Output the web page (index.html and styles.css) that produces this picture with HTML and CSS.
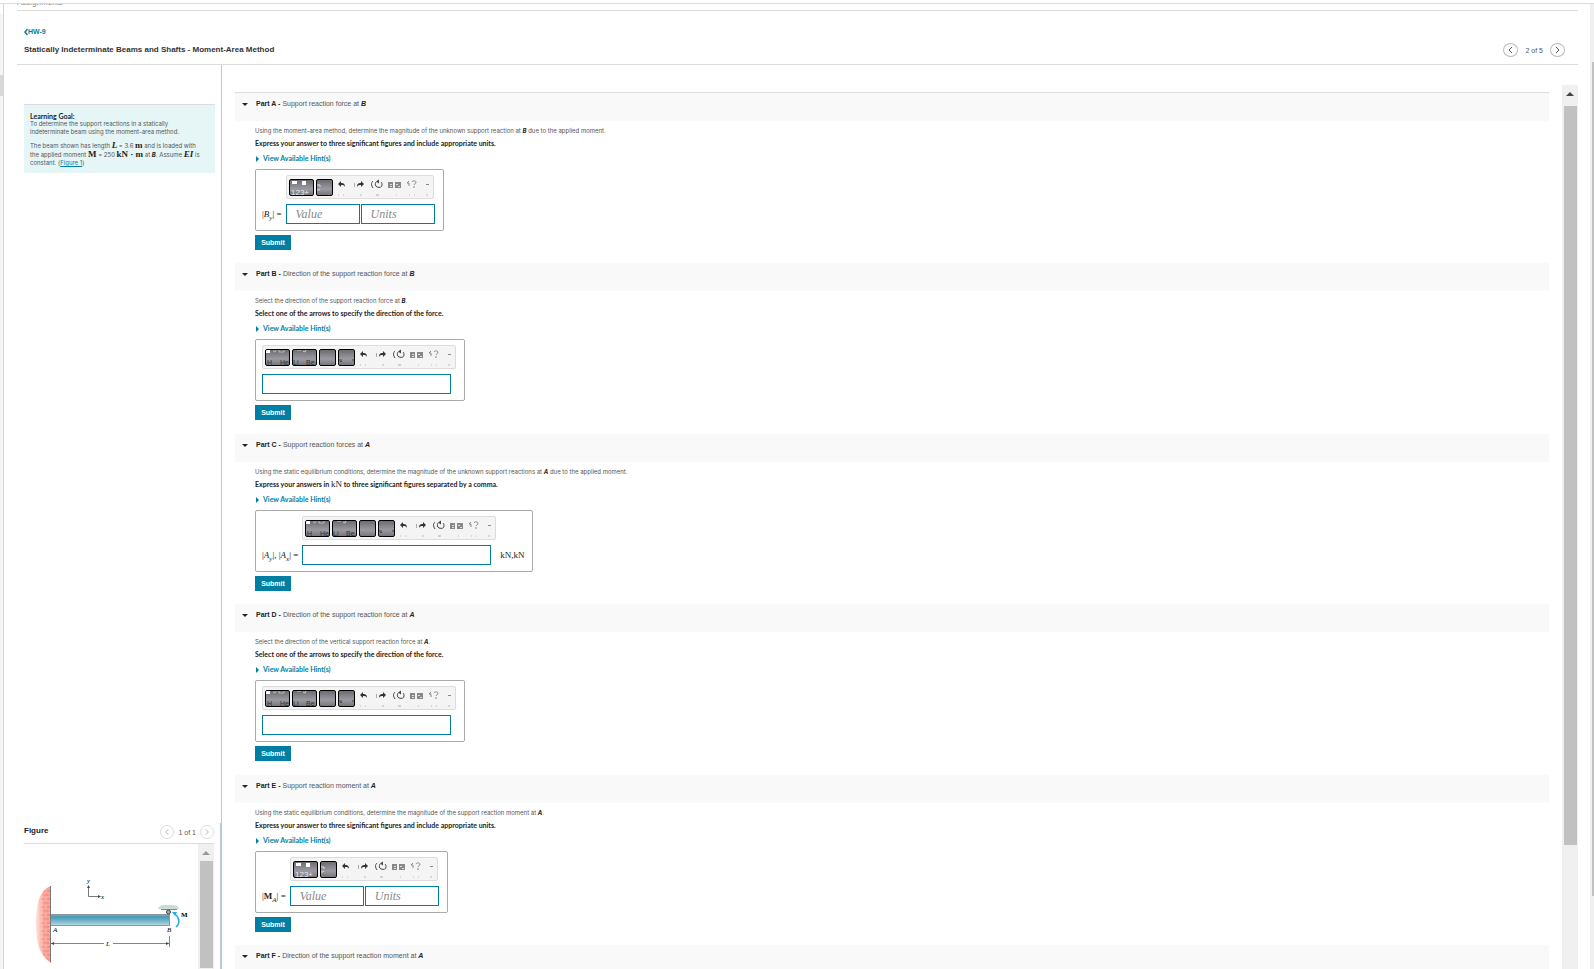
FILE: index.html
```html
<!DOCTYPE html>
<html lang="en">
    <head>
        <meta charset="UTF-8" />
        <meta name="viewport" content="width=device-width, initial-scale=1.0" />
        <title>Statically Indeterminate Beams and Shafts - Moment-Area Method</title>
        <link rel="stylesheet" href="styles.css">
    </head>
    <body>
        <!-- Shared icons -->
        <svg class="sprite" aria-hidden="true">
            <symbol id="undo" viewBox="0 0 16 22">
                <path d="M5 8l3-3v2c3 0 4 1 4 4-1-2-2-2-4-2v2z" fill="#333" />
                <path d="M5 19h1M10 19h1" stroke="#bbb" />
            </symbol>
            <symbol id="redo" viewBox="0 0 16 22">
                <path d="M13 8l-3-3v2c-3 0-4 1-4 4 1-2 2-2 4-2v2z" fill="#333" />
                <path d="M3.500 7v4" stroke="#aaa" />
                <path d="M9 19h2" stroke="#bbb" />
            </symbol>
            <symbol id="reset" viewBox="0 0 16 22">
                <path d="M4 5c-2 2-2 4 0 7M8 11c3 1 5 0 5-2 0-1 0-2-1-3M7 6c-1 2-1 4 1 5" fill="none" stroke="#444" />
                <path d="M7 5.500l3-2v4z" fill="#444" />
                <path d="M7 19h3" stroke="#aaa" />
            </symbol>
            <symbol id="keyboard" viewBox="0 0 16 22">
                <path d="M1 6h5v6H1zM8 6h6v6H8z" fill="#888" />
                <path d="M3 8.500h2M3 10.500h2M9 8.500h2M11 10.500h2" stroke="#ddd" />
                <path d="M9 19h1" stroke="#bbb" />
            </symbol>
            <symbol id="help" viewBox="0 0 16 22">
                <path d="M4 5L2 7h2v3M7 6c1-2 4-1 4 0 0 2-2 2-2 3M9 10v2" fill="none" stroke="#888" />
                <path d="M4 19h1M9 19h1" stroke="#bbb" />
            </symbol>
            <symbol id="more" viewBox="0 0 10 22">
                <path d="M3 8.500h3" stroke="#888" />
                <path d="M3 19h2" stroke="#bbb" />
            </symbol>
            <symbol id="key-template" viewBox="0 0 23 15">
                <path d="M2 1h5v3H2zM12 1h4v4h-4z" fill="#fff" />
                <text x="1" y="15" font-size="8" fill="#eee">123+</text>
            </symbol>
            <symbol id="key-symbol" viewBox="0 0 15 15">
                <path d="M0 5h3v2M0 10h2l1-1" fill="none" stroke="#ddd" />
            </symbol>
            <symbol id="key-hydrogen" viewBox="0 0 23 15">
                <path d="M0 0h4v3H0z" fill="#fff" />
                <path d="M7 1l2 1 1-2M13 0v2h5V0" fill="none" stroke="#bbb" />
                <text x="1" y="15" font-size="7" fill="#333">H</text>
                <text x="14" y="15" font-size="7" fill="#333">He</text>
            </symbol>
            <symbol id="key-lithium" viewBox="0 0 23 15">
                <path d="M4 0h4M10 1l2 1 1-2" fill="none" stroke="#ccc" />
                <text x="0" y="15" font-size="7" fill="#333">Li</text>
                <text x="13" y="15" font-size="7" fill="#333">Be</text>
            </symbol>
            <symbol id="key-blank" viewBox="0 0 15 15">
                <path d="M0 2.500h15" stroke="#77777c" />
            </symbol>
            <symbol id="key-drop" viewBox="0 0 15 15">
                <path d="M0 2.500h15" stroke="#77777c" />
                <path d="M0 10h3M1 11.500h2M14 9v2" stroke="#444" />
            </symbol>
            <symbol id="prev" viewBox="0 0 13 12">
                <path d="M8 3L5 6l3 3" fill="none" stroke="currentColor" />
            </symbol>
            <symbol id="next" viewBox="0 0 13 12">
                <path d="M5 3l3 3-3 3" fill="none" stroke="currentColor" />
            </symbol>
        </svg>

        <div class="top-rule"></div>
        <div class="shell">
            <div class="edge"></div>
            <div class="page">
                <div class="crumb">Assignments</div>
                <header class="header">
                    <div>
                        <a class="back" href="#"><svg viewBox="0 0 4 8"><path d="M3.500 1L1 4l2.500 3" fill="none" stroke="currentColor" stroke-width="1.500" /></svg>HW-9</a>
                        <h1>Statically Indeterminate Beams and Shafts - Moment-Area Method</h1>
                    </div>
                    <nav class="pager">
                        <button aria-label="Previous item"><svg><use href="#prev" /></svg></button>
                        <span>2 of 5</span>
                        <button aria-label="Next item"><svg><use href="#next" /></svg></button>
                    </nav>
                </header>

                <div class="columns">
                    <aside class="sidebar">
                        <div class="goal-pane">
                            <div class="goal">
                                <h2>Learning Goal:</h2>
                                <p>To determine the support reactions in a statically indeterminate beam using the moment-area method.</p>
                                <p>The beam shown has length <i class="math">L</i> = 3.6 <b class="math">m</b> and is loaded with the applied moment <b class="math">M</b> = 250 <b class="math">kN · m</b> at <i class="var">B</i>. Assume <i class="math">EI</i> is constant. (<a href="#figure">Figure 1</a>)</p>
                            </div>
                        </div>
                        <div class="figure-pane" id="figure">
                            <div class="figure-head">
                                <h2>Figure</h2>
                                <nav class="pager muted">
                                    <button aria-label="Previous figure"><svg><use href="#prev" /></svg></button>
                                    <span>1 of 1</span>
                                    <button aria-label="Next figure"><svg><use href="#next" /></svg></button>
                                </nav>
                            </div>
                            <div class="figure-body">
                                <svg class="figure" viewBox="0 0 170 125">
                                    <defs>
                                        <linearGradient id="beam" x1="0" y1="0" x2="0" y2="1">
                                            <stop offset="0" stop-color="#7fb9cc" />
                                            <stop offset="0.250" stop-color="#4699b5" />
                                            <stop offset="1" stop-color="#b9dbe8" />
                                        </linearGradient>
                                        <linearGradient id="wall" x1="0" y1="0" x2="1" y2="0">
                                            <stop offset="0" stop-color="#f9b5ab" stop-opacity="0.300" />
                                            <stop offset="0.500" stop-color="#f79a8e" />
                                            <stop offset="1" stop-color="#f58c80" />
                                        </linearGradient>
                                        <pattern id="bricks" width="8" height="8" patternUnits="userSpaceOnUse">
                                            <path d="M0 1h8M0 5h8M2 1v4M6 5v4" stroke="#fcd0c9" stroke-width="0.600" />
                                        </pattern>
                                    </defs>
                                    <path d="M27 42C18 45 14 54 13 66c-2 10-1 20 0 28 1 12 7 20 14 25z" fill="url(#wall)" />
                                    <path d="M27 42C18 45 14 54 13 66c-2 10-1 20 0 28 1 12 7 20 14 25z" fill="url(#bricks)" />
                                    <path d="M26.500 42v76" stroke="#777" />
                                    <path d="M64.500 42v10.500H75" fill="none" stroke="#555" stroke-width="0.800" />
                                    <path d="M63 44l1.500-3 1.500 3zM74 51l3 1.500-3 1.500z" fill="#444" />
                                    <text x="63" y="39">y</text>
                                    <text x="77" y="55">x</text>
                                    <path d="M27 70h119v12H27z" fill="url(#beam)" />
                                    <path d="M27 70.500h119M27 81.500h119M145.500 70v12" stroke="#8a9aa0" />
                                    <path d="M134 65c1-4 4-4 10-4s10 0 11 4z" fill="#c8dcd8" />
                                    <path d="M137 65.500h16" stroke="#7c8c90" />
                                    <circle cx="144.500" cy="68" r="2" fill="#aaa" stroke="#444" />
                                    <path d="M152 83c4-3 4-9-1-13" fill="none" stroke="#29abe2" stroke-width="1.500" />
                                    <path d="M148 68l5 0-2 4z" fill="#29abe2" />
                                    <text x="157" y="73" class="moment">M</text>
                                    <text x="29" y="88">A</text>
                                    <text x="143" y="88">B</text>
                                    <path d="M27 99.500h53M89 99.500h56M145.500 92v11" stroke="#666" stroke-width="0.800" />
                                    <path d="M27 99.500l3-1.500v3zM145 99.500l-3-1.500v3z" fill="#444" />
                                    <text x="82" y="102">L</text>
                                </svg>
                                <div class="scrollbar small"><i class="arrow"></i><i class="thumb"></i></div>
                            </div>
                        </div>
                    </aside>

                    <main class="content">
                        <section class="part">
                            <h3>Part A - <span>Support reaction force at <i>B</i></span></h3>
                            <div class="part-body">
                                <p>Using the moment-area method, determine the magnitude of the unknown support reaction at <i>B</i> due to the applied moment.</p>
                                <p class="instructions">Express your answer to three significant figures and include appropriate units.</p>
                                <a class="hints" href="#">View Available Hint(s)</a>
                                <div class="answer">
                                    <div class="toolbar">
                                        <button class="key wide" aria-label="Templates"><svg><use href="#key-template" /></svg></button>
                                        <button class="key" aria-label="Symbols"><svg><use href="#key-symbol" /></svg></button>
                                        <button class="tool" aria-label="Undo"><svg><use href="#undo" /></svg></button>
                                        <button class="tool" aria-label="Redo"><svg><use href="#redo" /></svg></button>
                                        <button class="tool" aria-label="Reset"><svg><use href="#reset" /></svg></button>
                                        <button class="tool" aria-label="Keyboard shortcuts"><svg><use href="#keyboard" /></svg></button>
                                        <button class="tool" aria-label="Help"><svg><use href="#help" /></svg></button>
                                        <button class="tool more" aria-label="More"><svg><use href="#more" /></svg></button>
                                    </div>
                                    <label for="value-a">|<i>B<sub>y</sub></i>| =</label>
                                    <div class="fields">
                                        <input id="value-a" type="text" placeholder="Value">
                                        <input type="text" placeholder="Units" aria-label="Units">
                                    </div>
                                </div>
                                <button class="submit">Submit</button>
                            </div>
                        </section>

                        <section class="part">
                            <h3>Part B - <span>Direction of the support reaction force at <i>B</i></span></h3>
                            <div class="part-body">
                                <p>Select the direction of the support reaction force at <i>B</i>.</p>
                                <p class="instructions">Select one of the arrows to specify the direction of the force.</p>
                                <a class="hints" href="#">View Available Hint(s)</a>
                                <div class="answer plain">
                                    <div class="toolbar">
                                        <button class="key wide" aria-label="Templates"><svg><use href="#key-hydrogen" /></svg></button>
                                        <button class="key wide" aria-label="Elements"><svg><use href="#key-lithium" /></svg></button>
                                        <button class="key" aria-label="Arrows"><svg><use href="#key-blank" /></svg></button>
                                        <button class="key" aria-label="Symbols"><svg><use href="#key-drop" /></svg></button>
                                        <button class="tool" aria-label="Undo"><svg><use href="#undo" /></svg></button>
                                        <button class="tool" aria-label="Redo"><svg><use href="#redo" /></svg></button>
                                        <button class="tool" aria-label="Reset"><svg><use href="#reset" /></svg></button>
                                        <button class="tool" aria-label="Keyboard shortcuts"><svg><use href="#keyboard" /></svg></button>
                                        <button class="tool" aria-label="Help"><svg><use href="#help" /></svg></button>
                                        <button class="tool more" aria-label="More"><svg><use href="#more" /></svg></button>
                                    </div>
                                    <div class="fields single">
                                        <input type="text" aria-label="Direction of the support reaction force at B">
                                    </div>
                                </div>
                                <button class="submit">Submit</button>
                            </div>
                        </section>

                        <section class="part">
                            <h3>Part C - <span>Support reaction forces at <i>A</i></span></h3>
                            <div class="part-body">
                                <p>Using the static equilibrium conditions, determine the magnitude of the unknown support reactions at <i>A</i> due to the applied moment.</p>
                                <p class="instructions">Express your answers in <span class="math">kN</span> to three significant figures separated by a comma.</p>
                                <a class="hints" href="#">View Available Hint(s)</a>
                                <div class="answer">
                                    <div class="toolbar">
                                        <button class="key wide" aria-label="Templates"><svg><use href="#key-hydrogen" /></svg></button>
                                        <button class="key wide" aria-label="Elements"><svg><use href="#key-lithium" /></svg></button>
                                        <button class="key" aria-label="Arrows"><svg><use href="#key-blank" /></svg></button>
                                        <button class="key" aria-label="Symbols"><svg><use href="#key-drop" /></svg></button>
                                        <button class="tool" aria-label="Undo"><svg><use href="#undo" /></svg></button>
                                        <button class="tool" aria-label="Redo"><svg><use href="#redo" /></svg></button>
                                        <button class="tool" aria-label="Reset"><svg><use href="#reset" /></svg></button>
                                        <button class="tool" aria-label="Keyboard shortcuts"><svg><use href="#keyboard" /></svg></button>
                                        <button class="tool" aria-label="Help"><svg><use href="#help" /></svg></button>
                                        <button class="tool more" aria-label="More"><svg><use href="#more" /></svg></button>
                                    </div>
                                    <label for="value-c">|<i>A<sub>y</sub></i>|, |<i>A<sub>x</sub></i>| =</label>
                                    <div class="fields single">
                                        <input id="value-c" type="text">
                                    </div>
                                    <span class="unit">kN,kN</span>
                                </div>
                                <button class="submit">Submit</button>
                            </div>
                        </section>

                        <section class="part">
                            <h3>Part D - <span>Direction of the support reaction force at <i>A</i></span></h3>
                            <div class="part-body">
                                <p>Select the direction of the vertical support reaction force at <i>A</i>.</p>
                                <p class="instructions">Select one of the arrows to specify the direction of the force.</p>
                                <a class="hints" href="#">View Available Hint(s)</a>
                                <div class="answer plain">
                                    <div class="toolbar">
                                        <button class="key wide" aria-label="Templates"><svg><use href="#key-hydrogen" /></svg></button>
                                        <button class="key wide" aria-label="Elements"><svg><use href="#key-lithium" /></svg></button>
                                        <button class="key" aria-label="Arrows"><svg><use href="#key-blank" /></svg></button>
                                        <button class="key" aria-label="Symbols"><svg><use href="#key-drop" /></svg></button>
                                        <button class="tool" aria-label="Undo"><svg><use href="#undo" /></svg></button>
                                        <button class="tool" aria-label="Redo"><svg><use href="#redo" /></svg></button>
                                        <button class="tool" aria-label="Reset"><svg><use href="#reset" /></svg></button>
                                        <button class="tool" aria-label="Keyboard shortcuts"><svg><use href="#keyboard" /></svg></button>
                                        <button class="tool" aria-label="Help"><svg><use href="#help" /></svg></button>
                                        <button class="tool more" aria-label="More"><svg><use href="#more" /></svg></button>
                                    </div>
                                    <div class="fields single">
                                        <input type="text" aria-label="Direction of the support reaction force at A">
                                    </div>
                                </div>
                                <button class="submit">Submit</button>
                            </div>
                        </section>

                        <section class="part">
                            <h3>Part E - <span>Support reaction moment at <i>A</i></span></h3>
                            <div class="part-body">
                                <p>Using the static equilibrium conditions, determine the magnitude of the support reaction moment at <i>A</i>.</p>
                                <p class="instructions">Express your answer to three significant figures and include appropriate units.</p>
                                <a class="hints" href="#">View Available Hint(s)</a>
                                <div class="answer">
                                    <div class="toolbar">
                                        <button class="key wide" aria-label="Templates"><svg><use href="#key-template" /></svg></button>
                                        <button class="key" aria-label="Symbols"><svg><use href="#key-symbol" /></svg></button>
                                        <button class="tool" aria-label="Undo"><svg><use href="#undo" /></svg></button>
                                        <button class="tool" aria-label="Redo"><svg><use href="#redo" /></svg></button>
                                        <button class="tool" aria-label="Reset"><svg><use href="#reset" /></svg></button>
                                        <button class="tool" aria-label="Keyboard shortcuts"><svg><use href="#keyboard" /></svg></button>
                                        <button class="tool" aria-label="Help"><svg><use href="#help" /></svg></button>
                                        <button class="tool more" aria-label="More"><svg><use href="#more" /></svg></button>
                                    </div>
                                    <label for="value-e">|<b>M</b><i><sub>A</sub></i>| =</label>
                                    <div class="fields">
                                        <input id="value-e" type="text" placeholder="Value">
                                        <input type="text" placeholder="Units" aria-label="Units">
                                    </div>
                                </div>
                                <button class="submit">Submit</button>
                            </div>
                        </section>

                        <section class="part">
                            <h3>Part F - <span>Direction of the support reaction moment at <i>A</i></span></h3>
                        </section>
                    </main>
                    <div class="scrollbar"><i class="arrow"></i><i class="thumb"></i></div>
                </div>
            </div>
            <div class="window-scroll"><i class="thumb"></i></div>
        </div>
    </body>
</html>
```
FILE: styles.css
```css
:root {
    --accent: #007fa3;
    --rule: #dcdcdc;
    --track: #f0f0f0;
    --thumb: #c1c1c1;
    --ui: "Liberation Sans", Arial, sans-serif;
    --copy: Inter, "Liberation Sans", sans-serif;
    --bold: Lato, "Liberation Sans", sans-serif;
    --serif: "Liberation Serif", "Times New Roman", serif;
}

* {
    box-sizing: border-box;
}

body {
    margin: 0;
    height: 100vh;
    display: flex;
    flex-direction: column;
    overflow: hidden;
    background: #fff;
    color: #222;
    font: 7px/9px var(--ui);
    font-variant-ligatures: none;
}

h1,
h2,
h3,
p {
    margin: 0;
}

a {
    color: var(--accent);
}

button {
    padding: 0;
    font-family: inherit;
    cursor: pointer;
}

svg {
    display: block;
}

.sprite {
    position: absolute;
    width: 0;
    height: 0;
}

.top-rule {
    height: 4px;
    flex: none;
    border-bottom: 1px solid var(--rule);
}

.shell {
    flex: 1;
    min-height: 0;
    display: flex;
}

.edge {
    width: 4px;
    border-right: 1px solid #d5d5d5;
    background: linear-gradient(#fff 10px, #f5f5f5 10px 71px, #d8d8d8 71px 92px, #f5f5f5 92px);
}

.page {
    flex: 1;
    min-width: 0;
    display: flex;
    flex-direction: column;
    padding: 0 12px 0 13px;
}

.crumb {
    display: flex;
    align-items: flex-end;
    flex: none;
    height: 7px;
    overflow: hidden;
    border-bottom: 1px solid var(--rule);
    color: #888;
    font-size: 8px;
    line-height: 10px;
    padding-bottom: 2px;
}

/* Header */
.header {
    display: flex;
    justify-content: space-between;
    align-items: flex-end;
    flex: none;
    height: 54px;
    padding: 0 13px 7px 7px;
    border-bottom: 1px solid var(--rule);
}

.back {
    display: flex;
    align-items: center;
    margin-bottom: 9px;
    font-weight: bold;
    text-decoration: none;
}

.back svg {
    width: 4px;
    height: 8px;
}

h1 {
    font-size: 8px;
    line-height: 10px;
    color: #333;
    margin-bottom: 2px;
}

.pager {
    display: flex;
    align-items: center;
    gap: 7px;
    color: #555;
}

.pager button {
    width: 15px;
    height: 14px;
    border: 1px solid #bbb;
    border-radius: 50%;
    background: #fff;
    color: #555;
}

.pager svg {
    width: 13px;
    height: 12px;
}

.pager.muted {
    gap: 4px;
}

.pager.muted button {
    width: 14px;
    border-color: #ddd;
    color: #aaa;
}

.pager.muted svg {
    width: 12px;
}

.columns {
    flex: 1;
    min-height: 0;
    display: flex;
}

/* Sidebar */
.sidebar {
    width: 205px;
    flex: none;
    display: flex;
    flex-direction: column;
}

.goal-pane {
    flex: 1;
    padding: 39px 6px 0 7px;
    border-right: 1px solid #bcc8d1;
}

.goal {
    padding: 7px 10px 6px 6px;
    border-top: 1px solid var(--rule);
    background: #e6f6f7;
    color: #555;
    font-family: var(--copy);
    font-size: 6px;
    line-height: 8px;
}

.goal h2 {
    font: bold 7px/8px var(--bold);
    color: #222;
}

.goal p + p {
    margin-top: 5px;
}

.math {
    font: 9px/8px var(--serif);
    color: #222;
}

b.math {
    font-weight: bold;
}

i.math {
    font-style: italic;
    font-weight: bold;
}

.var {
    color: #222;
    font-weight: bold;
}

.figure-pane {
    height: 146px;
    display: flex;
    flex-direction: column;
    padding-left: 7px;
    padding-right: 6px;
    border-right: 2px solid #b7c9da;
}

.figure-head {
    display: flex;
    justify-content: space-between;
    align-items: center;
    height: 21px;
    flex: none;
    padding-bottom: 2px;
    border-bottom: 1px solid var(--rule);
}

.figure-head h2 {
    font-size: 8px;
    line-height: 10px;
    margin-bottom: 2px;
}

.figure-body {
    flex: 1;
    min-height: 0;
    display: flex;
    justify-content: space-between;
}

.figure {
    width: 170px;
    height: 125px;
    font: italic 7px var(--serif);
}

.moment {
    font-style: normal;
    font-weight: bold;
}

/* Scrollbars */
.scrollbar {
    width: 16px;
    flex: none;
    margin-top: 20px;
    background: var(--track);
}

.scrollbar.small {
    margin-top: 0;
}

.arrow {
    display: block;
    width: 0;
    margin: 7px auto 10px;
    border: 4px solid transparent;
    border-top: 0;
    border-bottom-color: #444;
}

.small .arrow {
    margin-bottom: 6px;
    border-bottom-color: #999;
}

.thumb {
    display: block;
    width: 13px;
    height: calc(84% - 4px);
    margin: 0 auto;
    background: var(--thumb);
}

.small .thumb {
    height: 107px;
}

.window-scroll {
    width: 4px;
    padding-top: 58px;
    background: var(--track);
}

.window-scroll .thumb {
    width: 2px;
    height: 92%;
    margin-right: 0;
}

/* Parts */
.content {
    flex: 1;
    min-width: 0;
    overflow: hidden;
    padding: 27px 13px 0;
}

.part h3 {
    display: flex;
    align-items: flex-start;
    gap: 2px;
    height: 28px;
    padding: 6px 7px;
    background: #f9f9f9;
    font-size: 7px;
    line-height: 10px;
}

.part:first-child h3 {
    height: 29px;
    border-top: 1px solid var(--rule);
}

.part h3::before {
    content: "";
    margin: 4px 6px 0 0;
    border: 3px solid transparent;
    border-top-color: #222;
    border-bottom: 0;
}

.part h3 span {
    font-weight: normal;
    color: #555;
}

.part i {
    color: #222;
}

.part h3 i {
    font-weight: bold;
}

.part-body {
    display: flex;
    flex-direction: column;
    align-items: flex-start;
    padding: 5px 20px 13px;
    color: #555;
    font-family: var(--copy);
    font-size: 6px;
}

.part:nth-child(even) .part-body {
    padding-bottom: 14px;
}

.part-body p i {
    font-weight: bold;
}

.part-body .instructions {
    margin-top: 4px;
    color: #222;
    font: bold 7px/9px var(--bold);
}

.hints {
    display: flex;
    align-items: center;
    gap: 4px;
    margin: 6px 0;
    padding-left: 1px;
    font: bold 7px/9px var(--bold);
    text-decoration: none;
}

.hints::before {
    content: "";
    border: 3px solid transparent;
    border-left-color: var(--accent);
    border-right: 0;
}

.answer {
    display: grid;
    grid-template-columns: auto auto auto;
    column-gap: 4px;
    row-gap: 5px;
    align-items: center;
    padding: 5px 4px 6px 6px;
    border: 1px solid #aaa;
    border-radius: 2px;
    color: #222;
    font: 9px/20px var(--serif);
}

.answer.plain {
    grid-template-columns: auto;
    padding-right: 8px;
}

.answer sub {
    font-size: 7px;
    line-height: 0;
}

.toolbar {
    grid-column: 2;
    justify-self: start;
    display: flex;
    gap: 2px;
    height: 24px;
    padding-left: 2px;
    border: 1px solid var(--rule);
    border-radius: 2px;
    background: #f4f4f4;
}

.plain .toolbar {
    grid-column: 1;
}

.key {
    width: 17px;
    height: 17px;
    margin-top: 3px;
    border: 1px solid #000;
    border-radius: 2px;
    background: linear-gradient(#6c6c72, #9a9aa0 60%, #77777c);
    overflow: hidden;
}

.key.wide {
    width: 25px;
}

.key svg {
    width: 100%;
    height: 15px;
    font-family: var(--ui);
}

.key + .tool {
    margin-left: -2px;
}

.tool {
    width: 16px;
    height: 22px;
    border: 0;
    background: none;
}

.tool.more {
    width: 10px;
}

.tool svg {
    width: 100%;
    height: 22px;
}

.answer label {
    grid-column: 1;
    white-space: nowrap;
}

.fields {
    display: flex;
    gap: 1px;
}

.fields input {
    width: 74px;
    height: 20px;
    padding: 0 9px;
    border: 1px solid var(--accent);
    background: #fff;
    color: #222;
    font: 12px var(--serif);
}

.fields.single input {
    width: 189px;
}

.fields input::placeholder {
    color: #888;
    font-style: italic;
}

.unit {
    padding-right: 3px;
}

.submit {
    width: 36px;
    height: 15px;
    margin-top: 4px;
    border: 0;
    background: var(--accent);
    color: #fff;
    font: bold 7px/15px var(--ui);
}
```
